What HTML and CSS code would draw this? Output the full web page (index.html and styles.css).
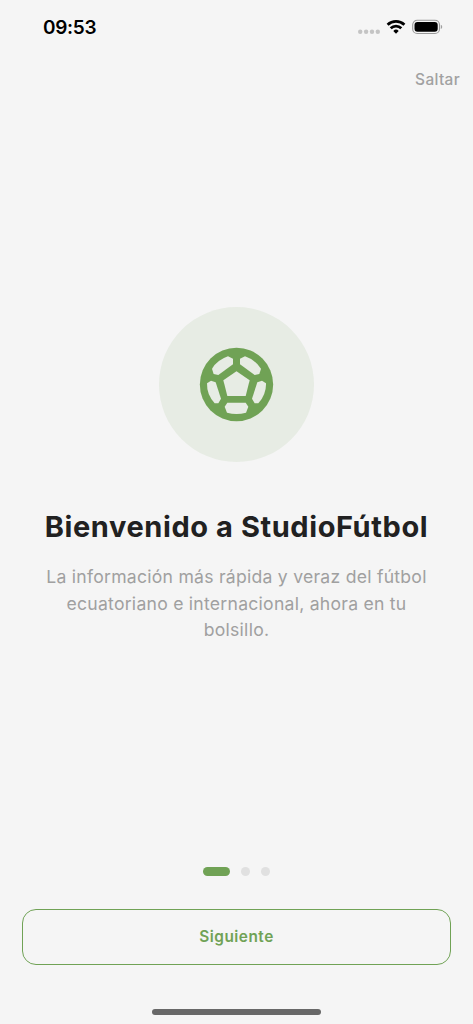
FILE: index.html
```html
<!DOCTYPE html>
<html lang="es">
<head>
<meta charset="utf-8">
<meta name="viewport" content="width=device-width, initial-scale=1">
<title>StudioFútbol</title>
<link rel="stylesheet" href="styles.css">
</head>
<body>
<div class="screen">
  <header class="status">
    <span class="time">09:53</span>
    <svg class="indicators" width="88" height="18" viewBox="0 0 88 18" aria-hidden="true">
      <g fill="#c4c4c4"><circle cx="3.2" cy="13.8" r="2.2"/><circle cx="9.1" cy="13.8" r="2.2"/><circle cx="15" cy="13.8" r="2.2"/><circle cx="20.8" cy="13.8" r="2.2"/></g>
      <g fill="none" stroke="#000" stroke-width="2.8"><path d="M30.6 6.800a12.200 12.200 0 0 1 16.800 0"/><path d="M33.700 10.300a7.600 7.600 0 0 1 10.600 0"/></g>
      <path d="M39 15.700l-2.700-2.800a3.900 3.900 0 0 1 5.400 0z"/>
      <rect x="55.700" y="2.300" width="26.800" height="13.200" rx="4.500" fill="none" stroke="#999" stroke-width="1.100"/>
      <rect x="57.500" y="4" width="23.200" height="9.800" rx="3"/>
      <path d="M83.800 6.700a2.400 2.400 0 0 1 0 4.400z" fill="#a0a0a0"/>
    </svg>
  </header>
  <div class="skip-row"><a class="skip">Saltar</a></div>
  <main class="intro">
    <div class="badge">
      <svg width="93" height="90" viewBox="0 0 279 270" aria-hidden="true">
        <circle class="ball" cx="139.5" cy="133.5" r="110"/>
        <g class="patch">
          <path d="M139.5 94L179 121L167 168H112L100 121Z"/>
          <path d="M114 49L129 56V73L85 105L71 102L66 86Q82 60 114 49Z"/>
          <path d="M165 49L150 56V73L194 105L208 102L213 86Q197 60 165 49Z"/>
          <path d="M63 122L77 127L93 176L85 190H74Q50 164 51 130Z"/>
          <path d="M216 122L202 127L186 176L194 190H205Q229 164 228 130Z"/>
          <path d="M112 188H167L175 200L168 218Q139.500 226 111 218L104 200Z"/>
        </g>
      </svg>
    </div>
    <h1 class="title">Bienvenido a StudioFútbol</h1>
    <p class="description">La información más rápida y veraz del fútbol<br>ecuatoriano e internacional, ahora en tu<br>bolsillo.</p>
  </main>
  <div class="dots"><span class="dot active"></span><span class="dot"></span><span class="dot"></span></div>
  <button class="next">Siguiente</button>
  <div class="home-indicator"></div>
</div>
</body>
</html>
```
FILE: styles.css
```css
* { box-sizing: border-box; }
body { margin: 0; background: #f5f5f5; font-family: Inter, "Liberation Sans", sans-serif; }
.screen { width: 473px; height: 1024px; display: flex; flex-direction: column; align-items: center; overflow: hidden; }
.status { width: 100%; height: 54px; padding: 0 28px 0 43px; display: flex; align-items: center; justify-content: space-between; color: #000; }
.time { font-size: 19px; font-weight: 600; letter-spacing: -0.3px; }
.skip-row { width: 100%; height: 50px; padding-right: 13px; display: flex; align-items: center; justify-content: flex-end; }
.skip { font-size: 15.4px; font-weight: 500; letter-spacing: 0.35px; color: #a1a1a1; }
.intro { width: 100%; height: 763px; padding-top: 203px; display: flex; flex-direction: column; align-items: center; text-align: center; }
.badge { width: 155px; height: 155px; border-radius: 50%; background: #e7ece4; display: flex; align-items: center; justify-content: center; flex-shrink: 0; }
.ball { fill: #70a255; }
.patch { fill: #e7ece4; }
.title { margin: 44px 0 0; font-size: 29px; line-height: 42px; font-weight: 700; letter-spacing: 0.58px; color: #212121; white-space: nowrap; }
.description { margin: 16px 0 0; font-size: 17.6px; line-height: 26.5px; font-weight: 400; letter-spacing: 0.25px; color: #a0a0a0; white-space: nowrap; }
.dots { height: 9px; display: flex; gap: 11px; flex-shrink: 0; }
.dot { width: 9px; height: 9px; border-radius: 5px; background: #e0e0e0; }
.dot.active { width: 27px; background: #70a255; }
.next { width: 429px; height: 56px; margin-top: 33px; padding: 0 0 2px; border: 1.2px solid #70a255; border-radius: 14px; background: transparent; color: #70a255; font: 600 15.4px Inter, sans-serif; letter-spacing: 0.5px; flex-shrink: 0; }
.home-indicator { width: 169px; height: 6px; margin-top: 44px; border-radius: 3px; background: #686868; flex-shrink: 0; }
```
